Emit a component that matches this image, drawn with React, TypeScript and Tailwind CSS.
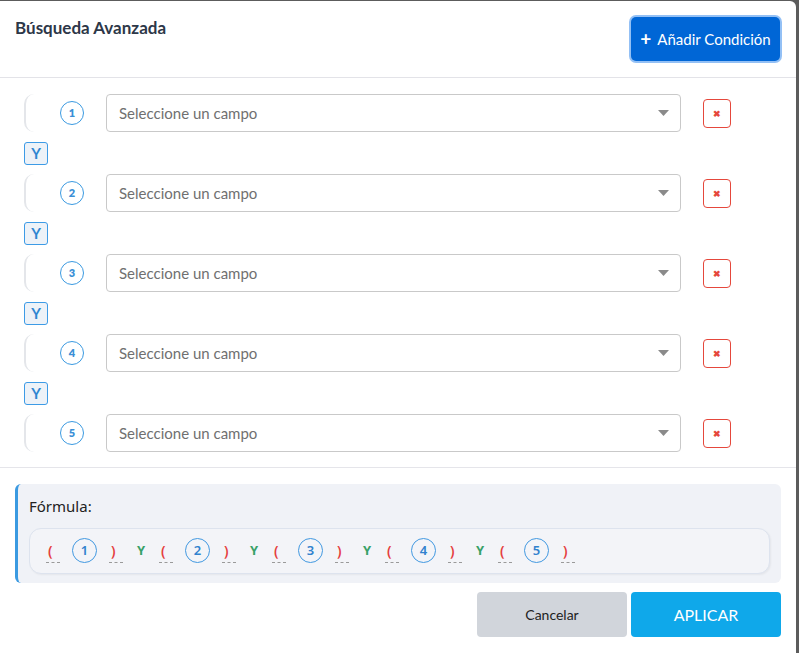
const rows = [1, 2, 3, 4, 5];

const Caret = () => (
  <svg width="11" height="6" viewBox="0 0 11 6" className="shrink-0">
    <path d="M0 0 L11 0 L5.5 6 Z" fill="#8a8a8a" />
  </svg>
);

const ConditionRow = ({ n }: { n: number }) => {
  return (
    <div className="flex items-center h-[38px] pl-6">
      <div className="w-4 h-[38px] border-l-2 border-[#e4e6ea] rounded-l-[10px] shrink-0" />
      <div className="ml-5 w-6 h-6 rounded-full border-[1.5px] border-[#3b9ae1] flex items-center justify-center text-[11px] font-extrabold text-[#3b8fd6] shrink-0">
        {n}
      </div>
      <div className="ml-[22px] w-[575px] h-[38px] border border-[#c9c9c9] rounded-[4px] flex items-center justify-between pl-3 pr-[11px]">
        <span className="text-[15px] text-[#707070]">Seleccione un campo</span>
        <Caret />
      </div>
      <button className="ml-[22px] w-7 h-[29px] border border-[#e5483c] rounded-[4px] flex items-center justify-center text-[#e5483c] text-[9px] font-bold leading-none">
        ✖
      </button>
    </div>
  );
};

const YBadge = () => (
  <div className="pl-6 pt-[10px] pb-[9px]">
    <div className="w-6 h-[23px] bg-[#edf2f8] border border-[#3d9be6] rounded-[3px] flex items-center justify-center text-[15px] font-bold text-[#2f86d0]">
      Y
    </div>
  </div>
);

const Paren = ({ c }: { c: string }) => (
  <div className="w-[14px] flex flex-col items-start mt-[5px]">
    <span className="text-[14px] font-semibold text-[#e53e3e] leading-[16px] pl-[2px]">{c}</span>
    <span className="mt-[3px] w-[14px] border-b border-dashed border-[#9a9a9a]" />
  </div>
);

const FormulaGroup = ({ n, last }: { n: number; last: boolean }) => (
  <>
    <Paren c="(" />
    <div className="w-[25px] h-[25px] rounded-full border border-[#4299e1] flex items-center justify-center text-[13px] font-semibold text-[#3182ce]">
      {n}
    </div>
    <Paren c=")" />
    {!last && (
      <div className="w-3 flex justify-center text-[13px] font-bold text-[#38a169]">Y</div>
    )}
  </>
);

export default function App() {
  return (
    <div className="w-[799px] h-[653px] bg-[#5c5c5c] pt-px overflow-hidden" style={{ fontFamily: "Lato, 'Open Sans', sans-serif" }}>
      <div className="w-[796px] h-[652px] bg-white rounded-tr-[6px] flex flex-col">
        <header className="h-[77px] border-b border-[#e3e3e8] flex justify-between items-start pl-[15px] pr-4 shrink-0">
          <h1 className="pt-[14px] text-[17px] font-bold text-[#2d3748]">Búsqueda Avanzada</h1>
          <button className="mt-4 w-[149px] h-[44px] bg-[#0066d6] rounded-[5px] ring-2 ring-[#93c0f5] text-white text-[15px] flex items-center justify-center gap-[6px]">
            <span className="text-[19px] font-bold leading-none -mt-[2px]">+</span>
            <span>Añadir Condición</span>
          </button>
        </header>

        <section className="pt-[16px] pb-[15px] border-b border-[#e5e5ea]">
          {rows.map((n, i) => (
            <div key={n}>
              <ConditionRow n={n} />
              {i < rows.length - 1 && <YBadge />}
            </div>
          ))}
        </section>

        <div className="mx-[15px] mt-4 h-[99px] bg-[#f0f2f7] border-l-[3px] border-[#3b9ae1] rounded-[6px] pl-[11px] pr-[11px] pt-[11px]" style={{ fontFamily: "'Noto Sans', sans-serif" }}>
          <div className="text-[15px] text-[#222]">Fórmula:</div>
          <div className="mt-[10px] h-[46px] bg-[#f3f4f8] border border-[#dde3ee] rounded-[12px] shadow-[1px_1px_2px_rgba(0,0,0,0.05)] flex items-center gap-3 pl-[16px]">
            {rows.map((n, i) => (
              <FormulaGroup key={n} n={n} last={i === rows.length - 1} />
            ))}
          </div>
        </div>

        <footer className="flex justify-end gap-1 pr-[15px] mt-[9px]">
          <button className="w-[150px] h-[45px] bg-[#d1d5db] rounded-[4px] text-[14px] text-[#222]">Cancelar</button>
          <button className="w-[150px] h-[45px] bg-[#0fa8ea] rounded-[4px] text-[16px] text-white">APLICAR</button>
        </footer>
      </div>
    </div>
  );
}
